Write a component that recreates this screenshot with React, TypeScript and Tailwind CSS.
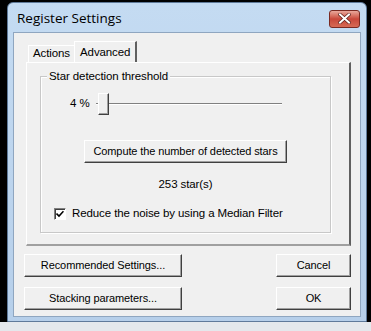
import React from "react";

const font = { fontFamily: '"Liberation Sans", Arial, sans-serif', letterSpacing: "-0.1px" };

function Btn({ label, className }: { label: string; className: string }) {
  return (
    <div
      className={`flex shrink-0 items-center justify-center whitespace-nowrap border border-t-white border-l-white border-r-[#404040] border-b-[#404040] bg-[#f0f0f0] text-[11px] text-black shadow-[inset_-1px_-1px_0_#a0a0a0] ${className}`}
    >
      {label}
    </div>
  );
}

export default function App() {
  return (
    <div className="flex h-[331px] w-[371px] flex-col overflow-hidden bg-black" style={font}>
      <div className="ml-[7px] mt-[2px] flex h-[320px] w-[360px] flex-col rounded-t-[6px] border border-[#5f7a9a] bg-gradient-to-b from-[#c4dbf2] to-[#b6cfea]">
        {/* title bar */}
        <div className="flex h-[29px] items-center justify-between pl-[9px] pr-[6px] pt-[2px]">
          <span
            className="text-[13.5px] tracking-normal text-black"
            style={{ fontFamily: '"Open Sans", "Noto Sans", sans-serif' }}
          >
            Register Settings
          </span>
          <div className="flex h-[18px] w-[31px] items-center justify-center rounded-[3px] border border-[#7a2a22] bg-gradient-to-b from-[#e8a89c] via-[#c8473a] to-[#d66a55]">
            <svg width="13" height="11" viewBox="0 0 13 11">
              <path d="M2 1.5 L11 9.5 M11 1.5 L2 9.5" stroke="#5a1e18" strokeWidth="3.4" strokeLinecap="square" />
              <path d="M2 1.5 L11 9.5 M11 1.5 L2 9.5" stroke="#ffffff" strokeWidth="2" strokeLinecap="square" />
            </svg>
          </div>
        </div>

        {/* client */}
        <div className="mx-[5px] flex h-[285px] flex-col border border-[#8fa6c0] bg-[#f0f0f0] text-[11.5px] text-black">
          {/* tabs */}
          <div className="ml-[14px] mt-[8px] flex h-[21px] items-end">
            <div className="flex h-[17px] items-center border-l border-t border-l-white border-t-white px-[4px] shadow-[1px_0_0_#a0a0a0]">
              Actions
            </div>
            <div className="-mb-px flex h-[22px] items-start border-l border-t border-r-2 border-l-white border-t-white border-r-[#606060] bg-[#f0f0f0] px-[5px] pt-[2px]">
              Advanced
            </div>
          </div>
          <div className="ml-[12px] flex h-[184px] w-[325px] flex-col border-l border-t border-r-2 border-b-2 border-l-white border-t-white border-r-[#606060] border-b-[#a0a0a0]">
            {/* group box */}
            <div className="relative ml-[13px] mt-[13px] flex h-[157px] w-[291px] flex-col items-center border border-[#c8c8c8] shadow-[inset_1px_1px_0_#ffffff,1px_1px_0_#ffffff]">
              <span className="absolute -top-[8px] left-[6px] bg-[#f0f0f0] px-[2px] leading-[14px]">
                Star detection threshold
              </span>
              {/* slider */}
              <div className="mt-[16px] flex w-full items-center">
                <span className="ml-[29px] w-[22px] whitespace-nowrap">4 %</span>
                <div className="relative ml-[4px] flex h-[22px] w-[186px] items-center">
                  <div className="h-[2px] w-full border-t border-t-[#808080] border-b border-b-white" />
                  <div className="absolute left-[2px] top-0 h-[22px] w-[11px] border border-t-white border-l-white border-r-[#404040] border-b-[#404040] bg-[#f0f0f0] shadow-[inset_-1px_-1px_0_#a0a0a0]" />
                </div>
              </div>
              <Btn label="Compute the number of detected stars" className="mt-[25px] h-[23px] w-[203px]" />
              <div className="mt-[14px] leading-[14px]">253 star(s)</div>
              <div className="mt-[14px] flex items-center self-start pl-[13px]">
                <div className="flex h-[12px] w-[12px] items-center justify-center border border-t-[#808080] border-l-[#808080] border-r-white border-b-white bg-white shadow-[inset_1px_1px_0_#404040]">
                  <svg width="8" height="8" viewBox="0 0 8 8">
                    <path d="M0.5 3.5 L3 6 L7.5 1.2" stroke="#000" strokeWidth="1.6" fill="none" />
                  </svg>
                </div>
                <span className="ml-[6px]">Reduce the noise by using a Median Filter</span>
              </div>
            </div>
          </div>

          {/* bottom buttons */}
          <div className="ml-[10px] mt-[8px] flex w-[327px] justify-between">
            <Btn label="Recommended Settings..." className="h-[23px] w-[158px]" />
            <Btn label="Cancel" className="h-[23px] w-[75px]" />
          </div>
          <div className="ml-[10px] mt-[10px] flex w-[327px] justify-between">
            <Btn label="Stacking parameters..." className="h-[23px] w-[158px]" />
            <Btn label="OK" className="h-[23px] w-[75px]" />
          </div>
        </div>
      </div>
      <div className="flex-1 bg-[#e4e8ec]" />
    </div>
  );
}
